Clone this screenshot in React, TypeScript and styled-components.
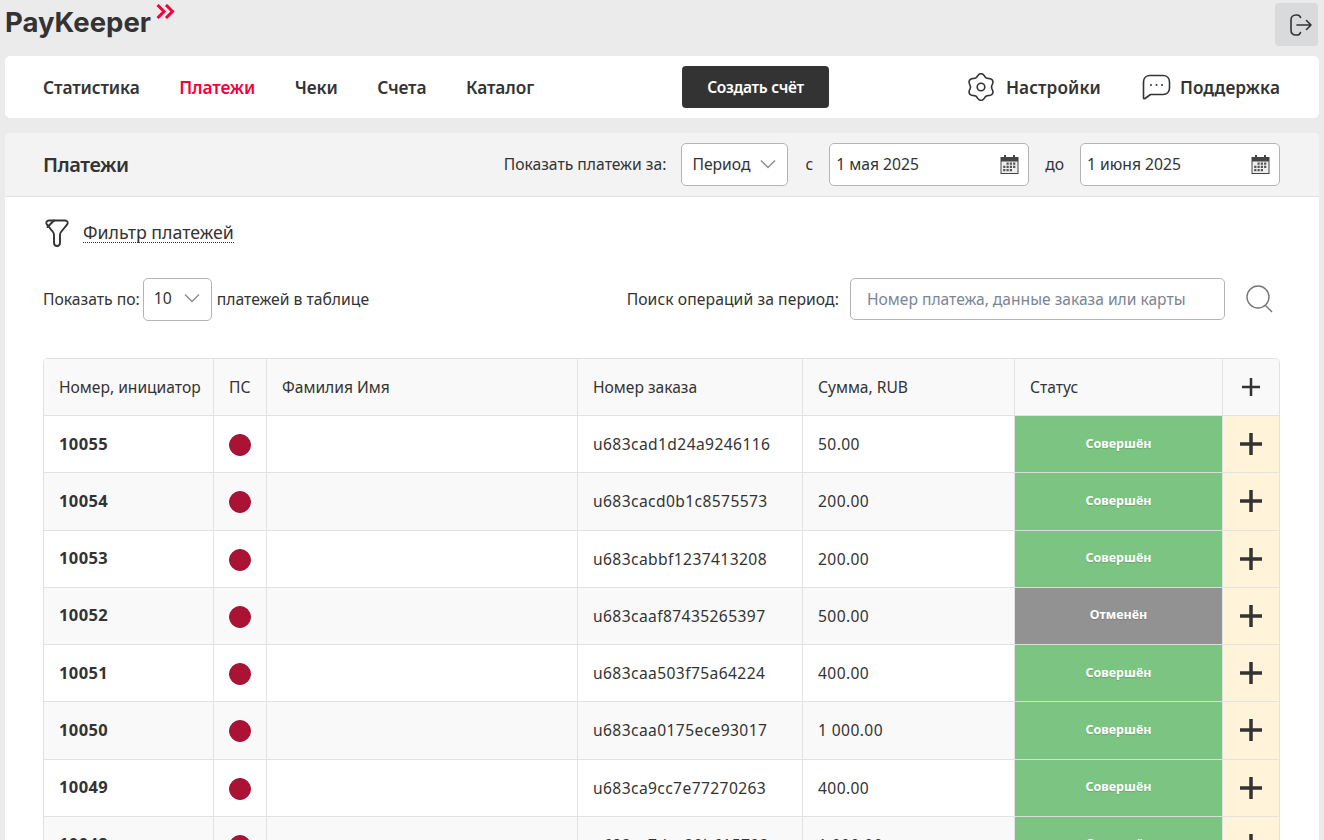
import React from 'react';
import styled, { createGlobalStyle } from 'styled-components';

const GlobalStyle = createGlobalStyle`
  html, body {
    margin: 0;
    height: 100%;
    overflow: hidden;
    background: #ebebeb;
  }
  body {
    font-family: "Noto Sans", "Open Sans", sans-serif;
    color: #333;
  }
  * { box-sizing: border-box; }
`;

const Page = styled.div`
  display: flex;
  flex-direction: column;
  padding: 0 5px;
  height: 840px;
  overflow: hidden;
`;

const TopBar = styled.header`
  display: flex;
  justify-content: space-between;
  align-items: flex-start;
  height: 56px;
  padding-top: 3px;
`;

const Logo = styled.div`
  display: flex;
  align-items: flex-start;
  gap: 5px;
`;

const LogoText = styled.span`
  font-family: Inter, sans-serif;
  font-weight: 700;
  font-size: 27.5px;
  line-height: 38px;
  color: #333;
`;

const LogoArrows = styled.svg`
  margin-top: 1px;
`;

const LogoutButton = styled.button`
  display: flex;
  align-items: center;
  justify-content: center;
  width: 43px;
  height: 43px;
  margin-right: 1px;
  border: none;
  border-radius: 4px;
  background: #d9dadc;
  padding: 0 0 0 8px;
`;

const NavCard = styled.nav`
  display: flex;
  align-items: center;
  height: 62px;
  padding: 0 39px 0 38px;
  background: #fff;
  border-radius: 5px;
`;

const NavLinks = styled.div`
  display: flex;
  gap: 39.5px;
  width: 639px;
`;

const NavLink = styled.a<{ $active?: boolean }>`
  font-size: 17.3px;
  font-weight: 600;
  letter-spacing: -0.1px;
  color: ${p => (p.$active ? '#f5003d' : '#333')};
`;

const CreateButton = styled.button`
  width: 147px;
  height: 42px;
  border: none;
  border-radius: 4px;
  background: #333;
  color: #fff;
  font: 600 15.5px "Noto Sans", sans-serif;
  letter-spacing: -0.3px;
`;

const NavRight = styled.div`
  display: flex;
  align-items: center;
  margin-left: auto;
  gap: 41px;
`;

const NavAction = styled.a<{ $gap: number }>`
  display: flex;
  align-items: center;
  gap: ${p => p.$gap}px;
  font-size: 17.2px;
  font-weight: 600;
  letter-spacing: 0.1px;
  color: #333;
`;

const Panel = styled.section`
  margin-top: 15px;
  background: #fff;
  border-radius: 5px 5px 0 0;
  flex: 1;
  overflow: hidden;
`;

const PanelHead = styled.div`
  display: flex;
  align-items: center;
  height: 64px;
  padding: 0 39px 0 38px;
  background: #f3f3f3;
  border-bottom: 1px solid #e2e2e2;
  font-size: 15.7px;
`;

const PanelTitle = styled.h1`
  margin: 0 auto 0 0;
  font-size: 20px;
  font-weight: 600;
  letter-spacing: -0.45px;
  color: #333;
`;

const SelectBox = styled.div<{ $w: number }>`
  display: flex;
  align-items: center;
  justify-content: space-between;
  width: ${p => p.$w}px;
  height: 43px;
  padding: 0 11px 2px 10px;
  background: #fff;
  border: 1px solid #b4b4b4;
  border-radius: 5px;
  font-size: 15.7px;
  color: #333;
`;

const PageSizeBox = styled(SelectBox)`
  margin-right: 2px;
`;

const HeadLabel = styled.span<{ $ml: number; $mr: number }>`
  margin-left: ${p => p.$ml}px;
  margin-right: ${p => p.$mr}px;
  padding-bottom: 2px;
`;

const DateBox = styled.div`
  display: flex;
  align-items: center;
  justify-content: space-between;
  width: 200px;
  height: 43px;
  padding: 0 9px 0 6px;
  background: #fff;
  border: 1px solid #b4b4b4;
  border-radius: 5px;
  font-size: 15.7px;
`;

const DateText = styled.span`
  padding-bottom: 2px;
`;

const PanelBody = styled.div`
  padding: 0 39px 0 38px;
`;

const FilterRow = styled.div`
  display: flex;
  align-items: center;
  gap: 12px;
  height: 72px;
`;

const FilterLink = styled.a`
  font-size: 17.8px;
  line-height: 20px;
  margin-top: -2px;
  color: #333;
  border-bottom: 1px dotted #333;
`;

const Controls = styled.div`
  display: flex;
  align-items: center;
  height: 60px;
  font-size: 15.7px;
`;

const ShowBy = styled.div`
  display: flex;
  align-items: center;
  gap: 3px;
  margin-right: auto;
`;

const SearchLabel = styled.span`
  margin-right: 11px;
  letter-spacing: 0.08px;
`;

const SearchBox = styled.div`
  display: flex;
  align-items: center;
  width: 375px;
  height: 42px;
  padding: 0 16px;
  border: 1px solid #b4b4b4;
  border-radius: 5px;
  color: #7b8594;
  font-size: 15.6px;
  white-space: nowrap;
`;

const SearchButton = styled.div`
  display: flex;
  margin: 0 7px 0 21px;
`;

const Table = styled.table`
  width: 1237px;
  margin-top: 29px;
  border-collapse: separate;
  border-spacing: 0;
  table-layout: fixed;
  font-size: 15.6px;
  border: 1px solid #e2e2e2;
  border-radius: 5px;
  border-bottom: none;
`;

const HeadCell = styled.th`
  height: 57px;
  padding: 0 15px;
  background: #f9f9f9;
  border-right: 1px solid #e2e2e2;
  border-bottom: 1px solid #e2e2e2;
  font-weight: 400;
  text-align: left;
  color: #333;
  white-space: nowrap;
  &:first-child { border-top-left-radius: 5px; }
  &:last-child { border-top-right-radius: 5px; border-right: none; padding: 0; }
`;

const Row = styled.tr<{ $alt: boolean }>`
  height: 57.25px;
  background: ${p => (p.$alt ? '#f9f9f9' : '#fff')};
`;

const Cell = styled.td`
  padding: 0 15px;
  border-right: 1px solid #e2e2e2;
  border-bottom: 1px solid #e2e2e2;
  white-space: nowrap;
`;

const OrderCell = styled(Cell)`
  letter-spacing: 0.4px;
`;

const NumberCell = styled(Cell)`
  padding-bottom: 2px;
  font-size: 16.5px;
  font-weight: 700;
  letter-spacing: 0.4px;
`;

const DotCell = styled(Cell)`
  padding: 0;
`;

const Dot = styled.div`
  width: 22px;
  height: 22px;
  margin: 2px auto 0;
  border-radius: 50%;
  background: #ab1335;
  border: 1px solid #9b1233;
`;

const StatusCell = styled(Cell)<{ $kind: 'done' | 'cancel' }>`
  padding: 0 0 2px;
  background: ${p => (p.$kind === 'done' ? '#7cc482' : '#929292')};
  border-bottom-color: #dcdcdc;
  color: #fff;
  font-size: 12.5px;
  font-weight: 700;
  text-align: center;
  text-shadow: 0 1px 1px rgba(0, 0, 0, 0.15);
`;

const PlusCell = styled.td`
  padding: 0;
  background: #fff3da;
  border-bottom: 1px solid #e2e2e2;
`;

const PlusWrap = styled.div`
  display: flex;
  justify-content: center;
  align-items: center;
`;

const Chevron = () => (
  <svg width="16" height="10" viewBox="0 0 16 10" fill="none" stroke="#8c8c8c" strokeWidth="1.4">
    <path d="M1 1.5 8 8.5 15 1.5" />
  </svg>
);

const CalendarIcon = () => (
  <svg width="19" height="19" viewBox="0 0 19 19">
    <path d="M0.500 2H18.500V19H0.500z" fill="#444" />
    <path d="M1.500 6.500h16V18h-16z" fill="#eee" />
    <rect x="4" y="0" width="2" height="3.500" fill="#444" />
    <rect x="13" y="0" width="2" height="3.500" fill="#444" />
    <path
      d="M6.500 7.500h2.200v2.200H6.500zm3.300 0H12v2.200H9.800zm3.300 0h2.200v2.200h-2.200zM3.200 10.800h2.200V13H3.200zm3.300 0h2.200V13H6.500zm3.300 0H12V13H9.800zm3.300 0h2.200V13h-2.200zM3.200 14.100h2.200v2.200H3.200zm3.300 0h2.200v2.200H6.500zm3.300 0H12v2.200H9.800z"
      fill="#555"
    />
  </svg>
);

const PlusIcon = ({ size, weight }: { size: number; weight: number }) => (
  <svg width={size} height={size} viewBox={`0 0 ${size} ${size}`} fill="#333">
    <rect x="0" y={(size - weight) / 2} width={size} height={weight} />
    <rect x={(size - weight) / 2} y="0" width={weight} height={size} />
  </svg>
);

// six soft lobes: one on top, one at the bottom, two on each side
const gearPath = () => {
  const points: string[] = [];
  for (let i = 0; i < 120; i++) {
    const a = (i / 120) * Math.PI * 2;
    const r = 11.9 + 1.4 * Math.cos(6 * a);
    points.push(`${(14 + r * Math.sin(a)).toFixed(2)} ${(14 - r * Math.cos(a)).toFixed(2)}`);
  }
  return `M${points.join('L')}Z`;
};

const rows: { id: string; order: string; sum: string; kind: 'done' | 'cancel' }[] = [
  { id: '10055', order: 'u683cad1d24a9246116', sum: '50.00', kind: 'done' },
  { id: '10054', order: 'u683cacd0b1c8575573', sum: '200.00', kind: 'done' },
  { id: '10053', order: 'u683cabbf1237413208', sum: '200.00', kind: 'done' },
  { id: '10052', order: 'u683caaf87435265397', sum: '500.00', kind: 'cancel' },
  { id: '10051', order: 'u683caa503f75a64224', sum: '400.00', kind: 'done' },
  { id: '10050', order: 'u683caa0175ece93017', sum: '1 000.00', kind: 'done' },
  { id: '10049', order: 'u683ca9cc7e77270263', sum: '400.00', kind: 'done' },
  { id: '10048', order: 'u683ca7dac39b615793', sum: '1 000.00', kind: 'done' },
];

const App: React.FC = () => (
  <Page>
    <GlobalStyle />
    <TopBar>
      <Logo>
        <LogoText>PayKeeper</LogoText>
        <LogoArrows width="19" height="15" viewBox="0 0 19 15" fill="none" stroke="#f5003d" strokeWidth="3">
          <path d="M1.500 1 8 7.500 1.500 14M10 1l6.500 6.500L10 14" />
        </LogoArrows>
      </Logo>
      <LogoutButton aria-label="Выход">
        <svg width="22" height="22" viewBox="0 0 22 22" fill="none" stroke="#333" strokeWidth="1.6" strokeLinecap="round" strokeLinejoin="round">
          <path d="M10.500 3.500C10 1.800 8.700 1 7 1H6C3 1 1 3 1 6v10c0 3 2 5 5 5h1c1.700 0 3-.8 3.500-2.500" />
          <path d="M7 11h14M16.500 6.500 21 11l-4.500 4.500" />
        </svg>
      </LogoutButton>
    </TopBar>

    <NavCard>
      <NavLinks>
        <NavLink>Статистика</NavLink>
        <NavLink $active>Платежи</NavLink>
        <NavLink>Чеки</NavLink>
        <NavLink>Счета</NavLink>
        <NavLink>Каталог</NavLink>
      </NavLinks>
      <CreateButton>Создать счёт</CreateButton>
      <NavRight>
        <NavAction $gap={11}>
          <svg width="28" height="28" viewBox="0 0 28 28" fill="none" stroke="#333" strokeWidth="1.6" strokeLinejoin="round">
            <path d={gearPath()} />
            <circle cx="14" cy="14" r="3.800" />
          </svg>
          Настройки
        </NavAction>
        <NavAction $gap={9}>
          <svg width="29" height="27" viewBox="0 0 29 27" fill="none" stroke="#333" strokeWidth="1.6" strokeLinejoin="round">
            <path d="M8 1.500h13c3.800 0 6.500 2.700 6.500 6.500v6c0 3.800-2.700 6.500-6.500 6.500H8.500L3 24.500c-.8.600-1.500.2-1.500-.8V8C1.500 4.200 4.200 1.500 8 1.500z" />
            <circle cx="9" cy="11" r="1" fill="#333" stroke="none" />
            <circle cx="14.500" cy="11" r="1" fill="#333" stroke="none" />
            <circle cx="20" cy="11" r="1" fill="#333" stroke="none" />
          </svg>
          Поддержка
        </NavAction>
      </NavRight>
    </NavCard>

    <Panel>
      <PanelHead>
        <PanelTitle>Платежи</PanelTitle>
        <HeadLabel $ml={0} $mr={15}>Показать платежи за:</HeadLabel>
        <SelectBox $w={107}>
          Период
          <Chevron />
        </SelectBox>
        <HeadLabel $ml={17} $mr={16}>с</HeadLabel>
        <DateBox>
          <DateText>1 мая 2025</DateText>
          <CalendarIcon />
        </DateBox>
        <HeadLabel $ml={16} $mr={16}>до</HeadLabel>
        <DateBox>
          <DateText>1 июня 2025</DateText>
          <CalendarIcon />
        </DateBox>
      </PanelHead>

      <PanelBody>
        <FilterRow>
          <svg width="28" height="30" viewBox="0 0 28 30" fill="none" stroke="#333" strokeWidth="1.9" strokeLinejoin="round" strokeLinecap="round">
            <path d="M6 2.500h16c2.500 0 3.500 2.200 2 4.200l-6 7.300c-.8 1-1 1.800-1 3v7.500c0 2-1.200 3.500-3 3.500s-3-1.500-3-3.500V17c0-1.200-.2-2-1-3L4 6.700C2.500 4.700 3.500 2.500 6 2.500z" />
            <path d="M4.500 9 11 2.500" />
          </svg>
          <FilterLink>Фильтр платежей</FilterLink>
        </FilterRow>

        <Controls>
          <ShowBy>
            Показать по:
            <PageSizeBox $w={69}>
              10
              <Chevron />
            </PageSizeBox>
            платежей в таблице
          </ShowBy>
          <SearchLabel>Поиск операций за период:</SearchLabel>
          <SearchBox>Номер платежа, данные заказа или карты</SearchBox>
          <SearchButton>
            <svg width="27" height="28" viewBox="0 0 27 28" fill="none" stroke="#777" strokeWidth="1.400">
              <circle cx="12" cy="12" r="11" />
              <path d="M19.500 20.500 26 27" />
            </svg>
          </SearchButton>
        </Controls>

        <Table>
          <colgroup>
            <col style={{ width: 170 }} />
            <col style={{ width: 53 }} />
            <col style={{ width: 311 }} />
            <col style={{ width: 225 }} />
            <col style={{ width: 212 }} />
            <col style={{ width: 208 }} />
            <col />
          </colgroup>
          <thead>
            <tr>
              <HeadCell>Номер, инициатор</HeadCell>
              <HeadCell>ПС</HeadCell>
              <HeadCell>Фамилия Имя</HeadCell>
              <HeadCell>Номер заказа</HeadCell>
              <HeadCell>Сумма, RUB</HeadCell>
              <HeadCell>Статус</HeadCell>
              <HeadCell>
                <PlusWrap>
                  <PlusIcon size={18} weight={2.5} />
                </PlusWrap>
              </HeadCell>
            </tr>
          </thead>
          <tbody>
            {rows.map((r, i) => (
              <Row key={r.id} $alt={i % 2 === 1}>
                <NumberCell>{r.id}</NumberCell>
                <DotCell>
                  <Dot />
                </DotCell>
                <Cell />
                <OrderCell>{r.order}</OrderCell>
                <OrderCell>{r.sum}</OrderCell>
                <StatusCell $kind={r.kind}>{r.kind === 'done' ? 'Совершён' : 'Отменён'}</StatusCell>
                <PlusCell>
                  <PlusWrap>
                    <PlusIcon size={22} weight={3.5} />
                  </PlusWrap>
                </PlusCell>
              </Row>
            ))}
          </tbody>
        </Table>
      </PanelBody>
    </Panel>
  </Page>
);

export default App;
